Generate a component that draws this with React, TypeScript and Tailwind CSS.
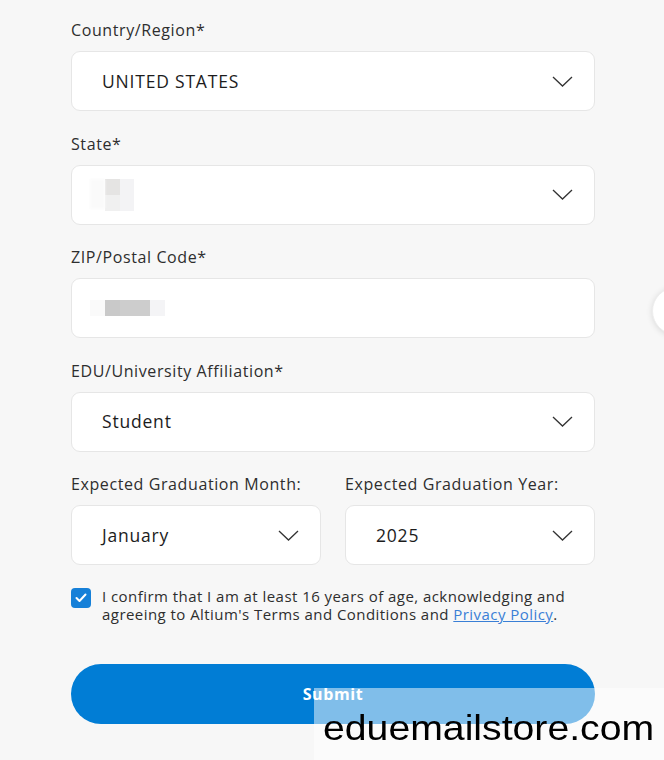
import { useState } from "react";

const font = { fontFamily: '"Open Sans", "Noto Sans", Arial, sans-serif' };

function Chevron() {
  return (
    <svg width="21" height="11" viewBox="0 0 21 11" fill="none" className="shrink-0">
      <path d="M1 1l9.5 9L20 1" stroke="#333" strokeWidth="1.3" />
    </svg>
  );
}

function Label({ children }: { children: React.ReactNode }) {
  return (
    <div className="text-[16px] leading-[20px] tracking-[0.6px] text-[#2e2e2e] mb-[11px]">{children}</div>
  );
}

function SelectBox({ value, children }: { value?: string; children?: React.ReactNode }) {
  return (
    <div className="h-[60px] bg-white border border-[#e6e6e6] rounded-[9px] flex items-center pl-[30px] pr-[21px]">
      <div className="flex-1 text-[17.5px] tracking-[0.8px] text-[#1c1c1c]">{value ?? children}</div>
      <Chevron />
    </div>
  );
}

export default function App() {
  const [agree, setAgree] = useState(true);

  return (
    <div className="relative min-h-screen bg-[#f7f7f7] overflow-hidden" style={font}>
      <div className="ml-[71px] w-[524px] pt-[20px] flex flex-col gap-[22.5px]">
        <div>
          <Label>Country/Region*</Label>
          <SelectBox value="UNITED STATES" />
        </div>

        <div>
          <Label>State*</Label>
          <SelectBox>
            {/* blurred value */}
            <div className="flex -ml-[12px] opacity-90">
              <div className="w-[15px] h-[30px] bg-[#fafafa] blur-[1px]" />
              <div className="flex flex-col">
                <div className="w-[15px] h-[16px] bg-[#e3e2e1]" />
                <div className="w-[15px] h-[16px] bg-[#efefef]" />
              </div>
              <div className="w-[14px] h-[32px] bg-[#f2f2f5]" />
            </div>
          </SelectBox>
        </div>

        <div>
          <Label>ZIP/Postal Code*</Label>
          <div className="h-[60px] bg-white border border-[#e6e6e6] rounded-[9px] flex items-center pl-[18px]">
            <div className="flex">
              <div className="w-[15px] h-[16px] bg-[#fafafa]" />
              <div className="w-[15px] h-[16px] bg-[#c9c9c9]" />
              <div className="w-[30px] h-[16px] bg-[#cdcdcd]" />
              <div className="w-[15px] h-[16px] bg-[#f4f4f6]" />
            </div>
          </div>
        </div>

        <div>
          <Label>EDU/University Affiliation*</Label>
          <SelectBox value="Student" />
        </div>

        <div className="grid grid-cols-2 gap-[24px]">
          <div>
            <Label>Expected Graduation Month:</Label>
            <SelectBox value="January" />
          </div>
          <div>
            <Label>Expected Graduation Year:</Label>
            <SelectBox value="2025" />
          </div>
        </div>
      </div>

      <div className="ml-[71px] w-[524px] mt-[22px] flex gap-[11px]">
        <button
          onClick={() => setAgree(!agree)}
          className={`mt-[1px] w-[20px] h-[20px] rounded-[4px] shrink-0 flex items-center justify-center ${agree ? "bg-[#1680d8]" : "bg-white border border-[#999]"}`}
        >
          {agree && (
            <svg width="12" height="10" viewBox="0 0 12 10" fill="none">
              <path d="M1.5 5l3 3 6-6.5" stroke="white" strokeWidth="2" strokeLinecap="round" strokeLinejoin="round" />
            </svg>
          )}
        </button>
        <p className="text-[15px] leading-[18px] tracking-[0.45px] text-[#2e2e2e]">
          I confirm that I am at least 16 years of age, acknowledging and agreeing to Altium's Terms and Conditions and{" "}
          <a className="text-[#3a7fd6] underline">Privacy Policy</a>.
        </p>
      </div>

      <button className="ml-[71px] mt-[41px] w-[524px] h-[60px] rounded-full bg-[#017dd5] text-white font-bold text-[16px] tracking-[0.6px]">
        Submit
      </button>

      {/* floating button at right edge */}
      <div className="absolute left-[652px] top-[287px] w-[48px] h-[48px] rounded-full bg-white border border-[#eee] shadow-[0_1px_6px_rgba(0,0,0,0.12)]" />

      {/* watermark */}
      <div className="absolute left-[314px] top-[688px] right-0 bottom-0 bg-white/50 pl-[9px]">
        <span
          className="inline-block mt-[20px] text-[35px] leading-[40px] text-black origin-left scale-x-[1.12]"
          style={{ fontFamily: '"Liberation Sans", Arial, sans-serif' }}
        >
          eduemailstore.com
        </span>
      </div>
    </div>
  );
}
